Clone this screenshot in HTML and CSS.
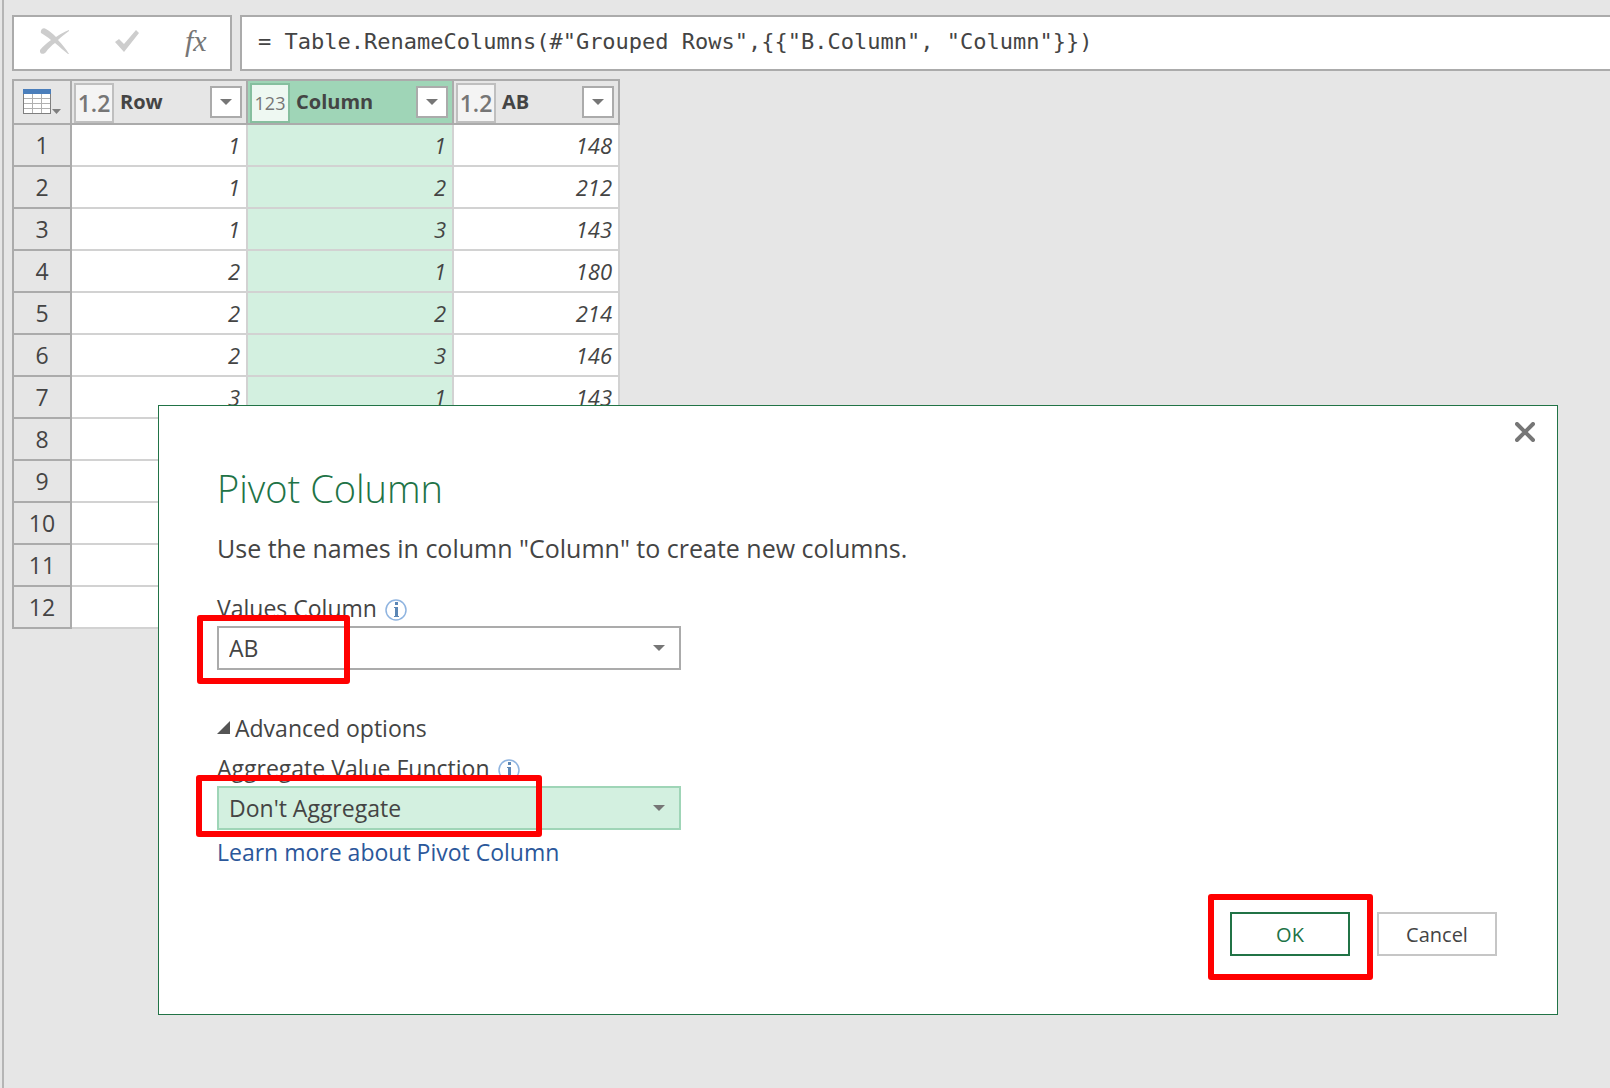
FILE: index.html
```html
<!DOCTYPE html>
<html lang="en">
<head>
  <meta charset="UTF-8">
  <meta name="viewport" content="width=device-width, initial-scale=1.0">
  <title>Power Query Editor</title>
  <link rel="stylesheet" href="styles.css">
</head>
<body>

  <main class="editor">
    <div class="formula-bar">
      <div class="formula-actions">
        <button type="button" aria-label="Cancel formula">
          <svg width="29" height="26" viewBox="0 0 29 26">
            <path d="M1 5C0 2 3 -1 6 1C10 3 13 6 16 9C20 6 24 4 29 2V3C25 6 21 9 18 12C22 16 26 21 29 26H28C24 23 20 19 15 15C12 17 8 21 6 24C4 27 -1 26 0 22C3 18 7 15 11 12C8 9 4 7 1 5Z" fill="#cdcdcd"/>
          </svg>
        </button>
        <button type="button" aria-label="Accept formula">
          <svg width="24" height="22" viewBox="0 0 24 22">
            <path d="M0 12L4 9L9 14L21 0L24 3L9 22Z" fill="#cdcdcd"/>
          </svg>
        </button>
        <button type="button" class="fx" aria-label="Insert function">fx</button>
      </div>
      <input type="text" class="formula" aria-label="Formula" value='= Table.RenameColumns(#"Grouped Rows",{{"B.Column", "Column"}})'>
    </div>

    <table class="grid">
      <colgroup>
        <col class="col-index">
        <col class="col-row">
        <col class="col-column">
        <col class="col-ab">
      </colgroup>
      <thead>
        <tr>
          <th>
            <button type="button" class="table-menu" aria-label="Table menu">
              <svg width="38" height="26" viewBox="0 0 38 26">
                <rect x="0" y="0" width="28" height="25" fill="#7f7f7f"/>
                <rect x="0" y="0" width="28" height="5" fill="#4a7ebb"/>
                <path d="M1 5H27V24H1Z" fill="#fff"/>
                <path d="M1 9.500H27M1 14.500H27M1 19.500H27M9.500 5V24M18.500 5V24" stroke="#b0b0b0"/>
                <path d="M29 20H38L33.500 25Z" fill="#7f7f7f"/>
              </svg>
            </button>
          </th>
          <th>
            <div class="head">
              <span class="type">1.2</span>
              <span class="name">Row</span>
              <button type="button" class="filter" aria-label="Filter Row"></button>
            </div>
          </th>
          <th class="selected">
            <div class="head">
              <span class="type type-int">123</span>
              <span class="name">Column</span>
              <button type="button" class="filter" aria-label="Filter Column"></button>
            </div>
          </th>
          <th>
            <div class="head">
              <span class="type">1.2</span>
              <span class="name">AB</span>
              <button type="button" class="filter" aria-label="Filter AB"></button>
            </div>
          </th>
        </tr>
      </thead>
      <tbody>
        <tr><th>1</th><td>1</td><td class="selected">1</td><td>148</td></tr>
        <tr><th>2</th><td>1</td><td class="selected">2</td><td>212</td></tr>
        <tr><th>3</th><td>1</td><td class="selected">3</td><td>143</td></tr>
        <tr><th>4</th><td>2</td><td class="selected">1</td><td>180</td></tr>
        <tr><th>5</th><td>2</td><td class="selected">2</td><td>214</td></tr>
        <tr><th>6</th><td>2</td><td class="selected">3</td><td>146</td></tr>
        <tr><th>7</th><td>3</td><td class="selected">1</td><td>143</td></tr>
        <tr><th>8</th><td></td><td class="selected"></td><td></td></tr>
        <tr><th>9</th><td></td><td class="selected"></td><td></td></tr>
        <tr><th>10</th><td></td><td class="selected"></td><td></td></tr>
        <tr><th>11</th><td></td><td class="selected"></td><td></td></tr>
        <tr><th>12</th><td></td><td class="selected"></td><td></td></tr>
      </tbody>
    </table>
  </main>

  <form class="dialog" role="dialog" aria-labelledby="dialogTitle">
    <button type="button" class="close" aria-label="Close">
      <svg width="20" height="20" viewBox="0 0 20 20">
        <path d="M2 2L18 18M18 2L2 18" stroke="#767676" stroke-width="4" stroke-linecap="round"/>
      </svg>
    </button>

    <h1 id="dialogTitle">Pivot Column</h1>
    <p class="intro">Use the names in column "Column" to create new columns.</p>

    <div class="field">
      <div class="field-label">
        <label for="valuesColumn">Values Column</label>
        <svg class="info" width="22" height="22" viewBox="0 0 22 22">
          <circle cx="11" cy="11" r="10" fill="#fff" stroke="#8fb4e0" stroke-width="1.500"/>
          <path d="M9 8H13V17H14V18H9V17H10V9H9ZM10 3H13V6H10Z" fill="#5b86b5"/>
        </svg>
      </div>
      <div class="select">
        <select id="valuesColumn">
          <option>AB</option>
        </select>
        <span class="mark mark-values"></span>
      </div>
    </div>

    <button type="button" class="advanced" aria-expanded="true">
      <svg width="14" height="14" viewBox="0 0 14 14">
        <path d="M13 0V13H0Z" fill="#555"/>
      </svg>
      Advanced options
    </button>

    <div class="field">
      <div class="field-label">
        <label for="aggregate">Aggregate Value Function</label>
        <svg class="info" width="22" height="22" viewBox="0 0 22 22">
          <circle cx="11" cy="11" r="10" fill="#fff" stroke="#8fb4e0" stroke-width="1.500"/>
          <path d="M9 8H13V17H14V18H9V17H10V9H9ZM10 3H13V6H10Z" fill="#5b86b5"/>
        </svg>
      </div>
      <div class="select select-active">
        <select id="aggregate">
          <option>Don't Aggregate</option>
        </select>
        <span class="mark mark-aggregate"></span>
      </div>
    </div>

    <a class="learn" href="#">Learn more about Pivot Column</a>

    <div class="buttons">
      <div class="ok-wrap">
        <button type="submit" class="ok">OK</button>
        <span class="mark mark-ok"></span>
      </div>
      <button type="button">Cancel</button>
    </div>
  </form>

</body>
</html>
```

FILE: styles.css
```css
* {
  box-sizing: border-box;
}

body {
  margin: 0;
  min-height: 100vh;
  position: relative;
  background-color: #e6e6e6;
  color: #444;
  font-family: "Open Sans", "Noto Sans", sans-serif;
  font-size: 23px;
}

button,
input,
select {
  font-family: inherit;
  font-size: inherit;
  color: inherit;
}

button {
  padding: 0;
  background: none;
  border: none;
  cursor: pointer;
}

svg {
  display: block;
}

.editor {
  min-height: 100vh;
  margin-left: 2px;
  padding: 15px 0 0 8px;
  border-left: 2px solid #b5b5b5;
}

/* formula bar */
.formula-bar {
  display: flex;
  gap: 8px;
  margin-bottom: 8px;
}

.formula-actions {
  display: flex;
  align-items: center;
  gap: 46px;
  width: 220px;
  height: 56px;
  padding: 0 0 4px 26px;
  background: #fff;
  border: 2px solid #ababab;
}

.fx {
  font-family: "Liberation Serif", serif;
  font-style: italic;
  font-size: 30px;
  line-height: 32px;
  color: #767676;
}

.formula {
  flex: 1;
  min-width: 0;
  height: 56px;
  padding: 0 16px 4px;
  background: #fff;
  border: 2px solid #ababab;
  border-right: none;
  border-radius: 0;
  font-family: "DejaVu Sans Mono", monospace;
  font-size: 22px;
}

/* data grid */
.grid {
  width: 608px;
  table-layout: fixed;
  border-collapse: separate;
  border-spacing: 0;
}

.col-index {
  width: 60px;
}

.col-row {
  width: 176px;
}

.col-column {
  width: 206px;
}

.col-ab {
  width: 166px;
}

.grid th {
  padding: 0;
  background: #e6e6e6;
  border-right: 2px solid #ababab;
  border-bottom: 2px solid #ababab;
}

.grid th:first-child {
  border-left: 2px solid #ababab;
}

.grid thead th {
  height: 46px;
  border-top: 2px solid #ababab;
}

.grid tbody th {
  font-weight: normal;
}

.grid td {
  height: 42px;
  padding: 0 6px;
  background: #fff;
  border-right: 2px solid #d2d2d2;
  border-bottom: 2px solid #d2d2d2;
  font-size: 22px;
  font-style: italic;
  line-height: 40px;
  text-align: right;
}

.grid thead .selected {
  background: #9fd5b7;
}

.grid td.selected {
  background: #d3f0e0;
}

.head {
  display: flex;
  align-items: center;
  gap: 6px;
  height: 42px;
  padding: 0 4px 0 2px;
}

.type {
  width: 40px;
  height: 40px;
  align-self: flex-end;
  background: #f4f4f4;
  border: 2px solid #bfbfbf;
  color: #767676;
  font-size: 23px;
  font-weight: 600;
  line-height: 36px;
  text-align: center;
}

.type-int {
  font-size: 18px;
  font-weight: 500;
}

.selected .type {
  background: #eef8f2;
  border-color: #86bf9f;
}

.name {
  flex: 1;
  font-size: 20px;
  line-height: 38px;
  text-align: left;
}

.filter {
  display: flex;
  align-items: center;
  justify-content: center;
  width: 32px;
  height: 32px;
  background: #fff;
  border: 2px solid #ababab;
}

.filter::after,
.select::after {
  content: "";
  border: 6px solid transparent;
  border-top-color: #767676;
  border-bottom: none;
}

.table-menu {
  display: block;
  margin: 0 auto;
}

/* dialog */
.dialog {
  position: absolute;
  top: 405px;
  left: 158px;
  right: 52px;
  padding: 58px 60px 58px 58px;
  background: #fff;
  border: 1px solid #217346;
}

.close {
  position: absolute;
  top: 16px;
  right: 22px;
}

h1 {
  margin: 0 0 18px;
  color: #217346;
  font-size: 38px;
  font-weight: 300;
  line-height: 48px;
}

.intro {
  margin: 0 0 26px;
  font-size: 25px;
  line-height: 36px;
}

.field {
  width: 464px;
}

.field-label {
  display: flex;
  align-items: center;
  gap: 8px;
  margin-bottom: 2px;
  line-height: 32px;
}

.info {
  margin-top: 4px;
}

.select {
  position: relative;
}

.select::after {
  position: absolute;
  top: 19px;
  right: 16px;
  pointer-events: none;
}

select {
  display: block;
  width: 100%;
  height: 44px;
  padding: 0 10px;
  appearance: none;
  background: #fff;
  border: 2px solid #ababab;
  border-radius: 0;
}

.select-active select {
  background: #d3f0e0;
  border-color: #9fd5b7;
}

.advanced {
  display: flex;
  align-items: center;
  gap: 4px;
  margin: 42px 0 8px;
  line-height: 32px;
}

.learn {
  display: block;
  margin: 6px 0 44px;
  color: #2b579a;
  line-height: 32px;
  text-decoration: none;
}

.buttons {
  display: flex;
  justify-content: flex-end;
  gap: 27px;
}

.ok-wrap {
  position: relative;
}

.buttons button {
  width: 120px;
  height: 44px;
  border: 2px solid #c6c6c6;
  font-size: 20px;
}

.buttons .ok {
  border-color: #217346;
  color: #217346;
}

/* red highlight frames */
.mark {
  position: absolute;
  z-index: 1;
  border: 6px solid #f00;
  border-radius: 3px;
  pointer-events: none;
}

.mark-values {
  top: -11px;
  left: -20px;
  width: 153px;
  height: 69px;
}

.mark-aggregate {
  top: -11px;
  left: -21px;
  width: 346px;
  height: 62px;
}

.mark-ok {
  top: -18px;
  left: -22px;
  width: 165px;
  height: 86px;
}
```
